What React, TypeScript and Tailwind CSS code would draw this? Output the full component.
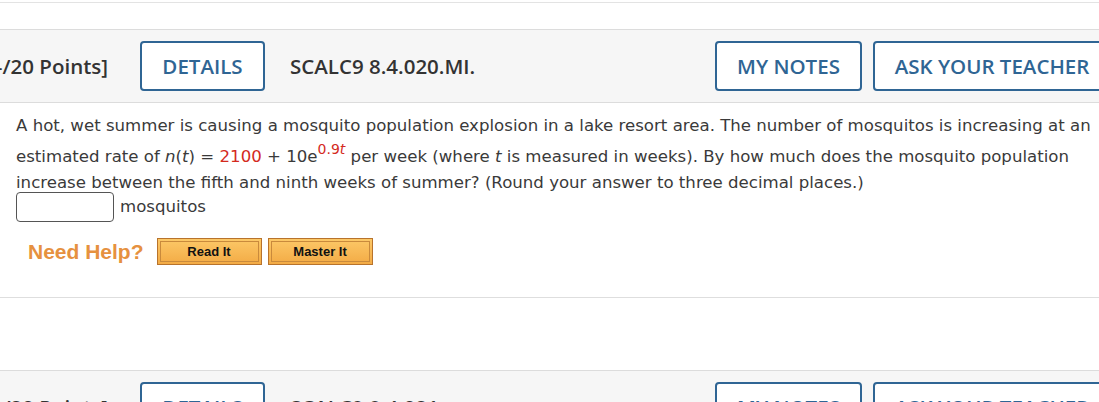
import React from 'react'

function QuestionHeader({ points, code }: { points: string; code: string }) {
  return (
    <div className="flex h-[74px] items-center border-y border-[#dcdcdc] bg-[#f6f6f6] font-['Open_Sans',sans-serif] text-[20.5px] font-semibold">
      <div className="flex w-[108px] shrink-0 justify-end overflow-hidden">
        <span className="shrink-0 whitespace-nowrap text-[#333]">{points}</span>
      </div>
      <button className="ml-[32px] h-[50px] w-[125px] shrink-0 rounded-[4px] border-2 border-[#2f6594] bg-white text-[#2f6594]">
        DETAILS
      </button>
      <span className="ml-[25px] shrink-0 whitespace-nowrap text-[#333]">{code}</span>
      <button className="ml-auto h-[50px] w-[147px] shrink-0 rounded-[4px] border-2 border-[#2f6594] bg-white text-[#2f6594]">
        MY NOTES
      </button>
      <button className="ml-[11px] mr-[-12px] h-[50px] w-[238px] shrink-0 rounded-[4px] border-2 border-[#2f6594] bg-white text-[#2f6594]">
        ASK YOUR TEACHER
      </button>
    </div>
  )
}

function HelpButton({ label }: { label: string }) {
  return (
    <button className="h-[27px] w-[105px] border border-[#b8732c] bg-gradient-to-b from-[#fcc867] to-[#f3ab45] p-[2px] font-['Liberation_Sans',Arial,sans-serif] text-[13px] font-bold text-[#111]">
      <span className="flex h-full w-full items-center justify-center border border-[#c98a3c]">{label}</span>
    </button>
  )
}

export default function App() {
  return (
    <div className="h-[402px] w-[1099px] overflow-hidden bg-white">
      <div className="h-[2px]" />
      <div className="h-[27px] border-t border-[#e3e3e3]" />
      <QuestionHeader points="[–/20 Points]" code="SCALC9 8.4.020.MI." />

      <div className="h-[194px] pl-[16px] pr-[4px] pt-[10px] font-['DejaVu_Sans',Verdana,sans-serif] text-[16.6px] leading-[26px] text-[#3a3a3a]">
        <p>
          A hot, wet summer is causing a mosquito population explosion in a lake resort area. The number of mosquitos is
          increasing at an estimated rate of <i>n</i>(<i>t</i>) = <span className="text-[#d42a1e]">2100</span> + 10e
          <sup className="static align-[8px] text-[14px] leading-[21px] text-[#d42a1e]">
            0.9<i>t</i>
          </sup>{' '}
          per week (where <i>t</i> is measured in weeks). By how much does the mosquito population increase between the
          fifth and ninth weeks of summer? (Round your answer to three decimal places.)
        </p>
        <div className="mt-[-4px] flex items-center gap-[6px]">
          <input className="h-[30px] w-[98px] rounded-[4px] border border-[#555] bg-white" />
          <span>mosquitos</span>
        </div>
        <div className="mt-[16px] flex items-center pl-[12px]">
          <span className="font-['Liberation_Sans',Arial,sans-serif] text-[21px] font-bold text-[#e6913f]">Need Help?</span>
          <div className="ml-[13px] flex gap-[6px]">
            <HelpButton label="Read It" />
            <HelpButton label="Master It" />
          </div>
        </div>
      </div>

      <div className="h-[73px] border-t border-[#dedede]" />
      <QuestionHeader points="[–/20 Points]" code="SCALC9 8.4.021." />
    </div>
  )
}
